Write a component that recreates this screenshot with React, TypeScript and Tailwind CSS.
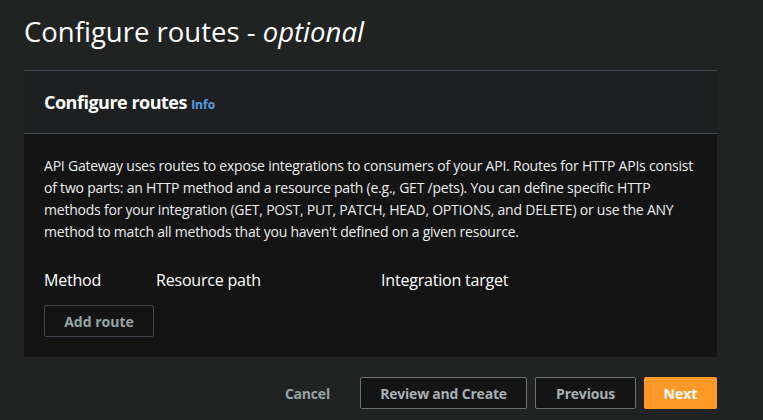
export default function App() {
  return (
    <div
      className="min-h-[420px] w-full bg-[#212323] pt-3 pr-[46px] pl-6 text-[#eaeded]"
      style={{ fontFamily: '"Open Sans", "Noto Sans", Arial, sans-serif' }}
    >
      <h1 className="text-[27.5px] leading-[40px] font-normal text-white">
        Configure routes - <i>optional</i>
      </h1>

      <div className="mt-[18px] border-t border-[#414750]">
        <div className="flex h-[63px] items-center border-b border-[#414750] bg-[#1e1f20] px-5">
          <h2 className="text-[18px] font-bold tracking-[-0.5px] text-white">
            Configure routes{' '}
            <span className="text-[12px] font-bold tracking-normal text-[#539fe5]">Info</span>
          </h2>
        </div>
        <div className="bg-[#141414] px-5 pt-[21px] pb-5">
          <p className="mr-[-6px] text-[14px] leading-[22px] tracking-[-0.22px] text-[#eaeded]">
            API Gateway uses routes to expose integrations to consumers of your API. Routes for HTTP APIs consist
            of two parts: an HTTP method and a resource path (e.g., GET /pets). You can define specific HTTP
            methods for your integration (GET, POST, PUT, PATCH, HEAD, OPTIONS, and DELETE) or use the ANY
            method to match all methods that you haven't defined on a given resource.
          </p>

          <div className="mt-[25px] flex text-[16px] tracking-[-0.2px] text-white">
            <span className="w-[112px]">Method</span>
            <span className="w-[225px]">Resource path</span>
            <span>Integration target</span>
          </div>

          <button className="mt-[13px] h-[32px] w-[110px] rounded-[2px] border border-[#414750] text-[14px] font-bold text-[#95a5a6]">
            Add route
          </button>
        </div>
      </div>

      <div className="mt-5 flex items-center justify-end gap-2">
        <button className="mr-0.5 h-[32px] px-5 text-[14px] font-bold tracking-[-0.2px] text-[#95a5a6]">Cancel</button>
        <button className="h-[32px] w-[167px] rounded-[2px] border border-[#687078] bg-[#141414] text-[14px] font-bold tracking-[-0.2px] text-[#a9b0b5]">
          Review and Create
        </button>
        <button className="h-[32px] w-[101px] rounded-[2px] border border-[#687078] bg-[#141414] text-[14px] font-bold tracking-[-0.2px] text-[#a9b0b5]">
          Previous
        </button>
        <button className="h-[32px] w-[73px] rounded-[2px] bg-[#ff9a2a] text-[14px] font-bold text-white">Next</button>
      </div>
    </div>
  )
}
